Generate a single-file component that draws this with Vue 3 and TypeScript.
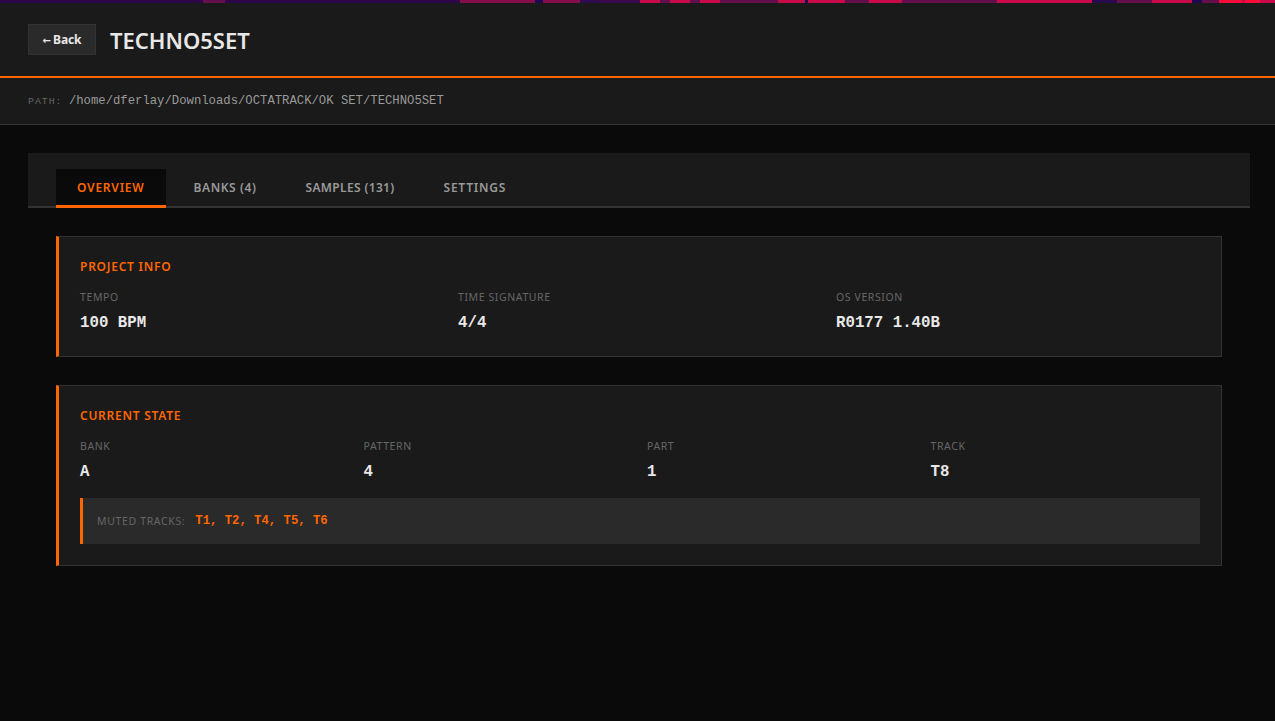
<script setup lang="ts">
const tabs = ['OVERVIEW', 'BANKS (4)', 'SAMPLES (131)', 'SETTINGS']
const info = [
  { label: 'TEMPO', value: '100 BPM' },
  { label: 'TIME SIGNATURE', value: '4/4' },
  { label: 'OS VERSION', value: 'R0177 1.40B' },
]
const state = [
  { label: 'BANK', value: 'A' },
  { label: 'PATTERN', value: '4' },
  { label: 'PART', value: '1' },
  { label: 'TRACK', value: 'T8' },
]
const P = '#2c0648'
const D = '#640e4c'
const M = '#860c4a'
const C = '#c80a48'
const N = '#1a0a50'
const R = '#f80a3a'
const stripBands: [number, string][] = [
  [203, P], [22, D], [235, P], [75, M], [8, N], [37, M], [20, '#300a50'], [40, '#3a0a4e'],
  [20, C], [10, D], [20, C], [10, D], [20, C], [5, D], [45, D], [8, D], [5, C], [22, C], [3, N], [7, C],
  [30, C], [24, D], [11, C], [22, C], [30, D], [65, D], [15, C], [80, C], [25, '#2a0a4e'], [35, D], [40, C],
  [10, N], [17, D], [23, R], [3, C], [15, R], [7, C],
]
let pos = 0
const stops: string[] = []
for (const [w, c] of stripBands) {
  stops.push(`${c} ${pos}px`, `${c} ${pos + w}px`)
  pos += w
}
const stripBg = `linear-gradient(90deg, ${stops.join(', ')})`
</script>

<template>
  <div class="page">
    <div class="strip" :style="{ background: stripBg }"></div>
    <header class="head">
      <button class="back"><span class="arrow">←</span> Back</button>
      <h1>TECHNO5SET</h1>
    </header>
    <div class="path"><span class="path-label">PATH:</span><span class="path-value">/home/dferlay/Downloads/OCTATRACK/OK SET/TECHNO5SET</span></div>
    <main class="main">
      <nav class="tabs">
        <div v-for="(t, i) in tabs" :key="t" class="tab" :class="{ active: i === 0 }">{{ t }}</div>
      </nav>
      <div class="content">
        <section class="card">
          <h2>PROJECT INFO</h2>
          <div class="grid three">
            <div v-for="x in info" :key="x.label">
              <div class="label">{{ x.label }}</div>
              <div class="value">{{ x.value }}</div>
            </div>
          </div>
        </section>
        <section class="card">
          <h2>CURRENT STATE</h2>
          <div class="grid four">
            <div v-for="x in state" :key="x.label">
              <div class="label">{{ x.label }}</div>
              <div class="value">{{ x.value }}</div>
            </div>
          </div>
          <div class="muted">
            <span class="muted-label">MUTED TRACKS:</span>
            <span class="muted-value">T1, T2, T4, T5, T6</span>
          </div>
        </section>
      </div>
    </main>
  </div>
</template>

<style>
html, body { margin: 0; background: #0a0a0a; }
</style>

<style scoped>
.page { min-height: 721px; background: #0a0a0a; font-family: "Noto Sans", "Open Sans", sans-serif; color: #e8e8e8; overflow: hidden; }
.strip { height: 3px; }
.head { height: 75px; box-sizing: border-box; border-bottom: 2px solid #ff6600; background: #1a1a1a; display: flex; align-items: center; gap: 14px; padding: 0 28px; }
.back { width: 68px; height: 31px; padding: 0; background: #2a2a2a; border: 1px solid #333; color: #e8e8e8; font: 700 12px "Noto Sans", sans-serif; letter-spacing: -.1px; }
.arrow { font: 700 10px "DejaVu Sans", sans-serif; letter-spacing: -1px; }
h1 { margin: 0; font-size: 22px; line-height: 28px; font-weight: 600; color: #e8e8e8; }
.path { height: 47px; box-sizing: border-box; background: #1a1a1a; border-bottom: 1px solid #333; padding: 0 28px; display: flex; align-items: center; font-family: "Liberation Mono", monospace; }
.path-label { font-size: 9.8px; color: #666; letter-spacing: 1px; margin-right: 6.5px; }
.path-value { font-size: 12.25px; color: #999; }
.main { padding: 28px 25px 0 28px; }
.tabs { display: flex; background: #1a1a1a; border-bottom: 2px solid #333; padding: 16px 28px 0; height: 37px; }
.tab { padding: 0 21px; margin-right: 7px; height: 39px; box-sizing: border-box; line-height: 38px; font-size: 12px; font-weight: 600; letter-spacing: .6px; color: #999; }
.tab:nth-child(1), .tab:nth-child(4) { letter-spacing: .75px; }
.tab:nth-child(3) { letter-spacing: .35px; }
.active { background: #0a0a0a; color: #ff6600; border-bottom: 3px solid #ff6600; padding-right: 22px; margin-right: 6px; }
.content { padding: 28px; display: flex; flex-direction: column; gap: 28px; }
.card { background: #1a1a1a; border: 1px solid #333; border-left: 3px solid #ff6600; padding: 21px; }
h2 { margin: 0 0 15px; font-size: 12px; line-height: 17px; font-weight: 600; letter-spacing: .75px; color: #ff6600; }
.grid { display: grid; gap: 14px; margin-bottom: 2px; }
.three { grid-template-columns: repeat(3, 1fr); }
.four { grid-template-columns: repeat(4, 1fr); }
.label { font-size: 10.5px; line-height: 14px; letter-spacing: .6px; color: #666; margin-bottom: 9px; }
.value { font-family: "Liberation Mono", monospace; font-size: 15.75px; line-height: 20px; font-weight: 700; color: #e8e8e8; }
.muted { margin-top: 16px; height: 46px; box-sizing: border-box; background: #2a2a2a; border-left: 3px solid #ff6600; padding: 0 14px; display: flex; align-items: center; gap: 10px; }
.muted-label { font-size: 10.5px; letter-spacing: .65px; color: #666; }
.muted-value { font-family: "Liberation Mono", monospace; font-size: 12.25px; font-weight: 700; color: #ff6600; }
</style>
